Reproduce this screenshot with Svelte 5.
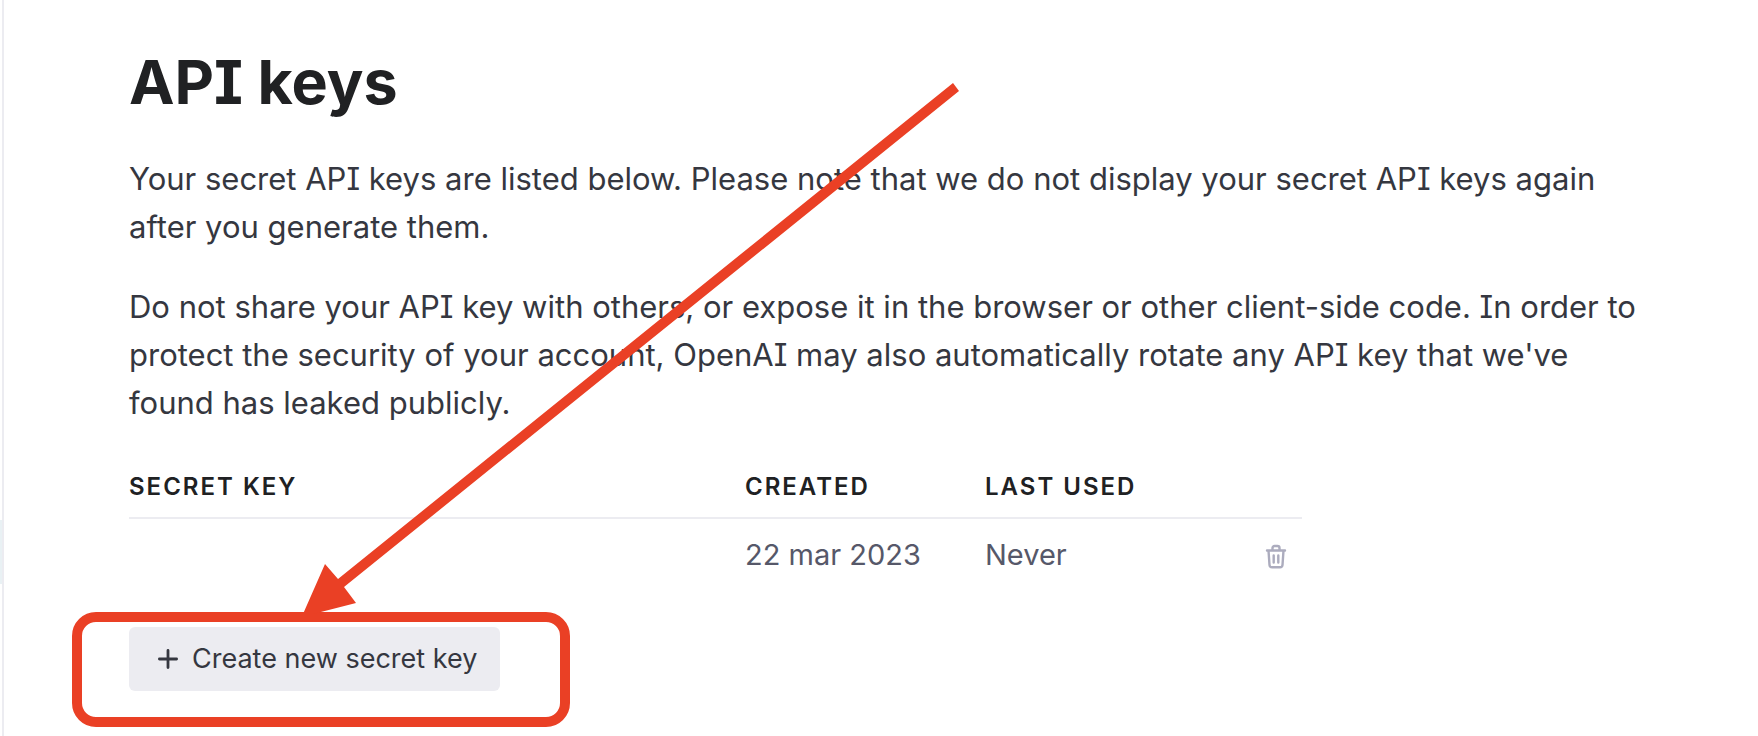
<script>
  const keys = [{ secret: '', created: '22 mar 2023', lastUsed: 'Never' }];
</script>

<div class="page">
  <div class="rail"><div class="active"></div></div>
  <main>
    <h1>API keys</h1>
    <p>
      Your secret API keys are listed below. Please note that we do not display your secret API keys
      again after you generate them.
    </p>
    <p>
      Do not share your API key with others, or expose it in the browser or other client-side code.
      In order to protect the security of your account, OpenAI may also automatically rotate any API
      key that we've found has leaked publicly.
    </p>
    <table>
      <thead>
        <tr>
          <th class="secret" scope="col">SECRET KEY</th>
          <th class="date" scope="col">CREATED</th>
          <th scope="col">LAST USED</th>
          <td></td>
        </tr>
      </thead>
      <tbody>
        {#each keys as key}
          <tr>
            <td>{key.secret}</td>
            <td>{key.created}</td>
            <td>{key.lastUsed}</td>
            <td class="actions">
              <button class="delete" aria-label="Delete key">
                <svg width="24" height="28" viewBox="0 0 24 28" fill="none" stroke="currentColor" stroke-width="2.4" stroke-linecap="round" stroke-linejoin="round">
                  <path d="M3 7.500h18M8.500 7.500V5a2 2 0 0 1 2-2h3a2 2 0 0 1 2 2V7.500M4.500 7.500l1 14.500a2.500 2.500 0 0 0 2.500 2.300h8a2.500 2.500 0 0 0 2.500-2.300L19.500 7.500M9.700 12.500v7M14.300 12.500v7" />
                </svg>
              </button>
            </td>
          </tr>
        {/each}
      </tbody>
    </table>
    <div class="create-row">
      <button class="create">
        <svg width="20" height="20" viewBox="0 0 20 20" fill="none" stroke="currentColor" stroke-width="2.800" stroke-linecap="round">
          <path d="M10 1.400v17.200M1.400 10h17.200" />
        </svg>
        Create new secret key
      </button>
      <div class="highlight"></div>
      <svg class="arrow" width="660" height="531" viewBox="0 0 660 531">
        <path d="M0 531L22 481L35 496L650 0L656 8L41 504L53 520L10 531Z" fill="#ea4025" />
      </svg>
    </div>
  </main>
</div>

<style>
  :global(body) {
    margin: 0;
    background: #fff;
  }
  .page {
    display: flex;
    min-height: 100vh;
    overflow: hidden;
    font-family: Inter, 'Liberation Sans', sans-serif;
    font-feature-settings: 'cv08';
    color: #353740;
  }
  .rail {
    flex: none;
    width: 2px;
    border-right: 2px solid #ececf1;
  }
  .active {
    height: 64px;
    margin-top: 520px;
    background: #e9f1f4;
  }
  main {
    flex: 1;
    padding: 44px 105px 44px 125px;
  }
  h1 {
    margin: 0 0 35px;
    font-size: 61px;
    line-height: 76px;
    font-weight: 700;
    color: #202123;
  }
  p {
    margin: 0 0 32px;
    font-size: 31px;
    line-height: 48px;
  }
  table {
    width: 77%;
    margin-top: 44px;
    table-layout: fixed;
    border-collapse: collapse;
    text-align: left;
  }
  th {
    padding: 0 0 14px;
    font-size: 24px;
    line-height: 32px;
    font-weight: 600;
    letter-spacing: 2px;
    color: #202123;
  }
  thead tr {
    border-bottom: 2px solid #ececf1;
  }
  .secret {
    width: 616px;
  }
  .date {
    width: 240px;
  }
  td {
    padding: 0;
    font-size: 29px;
    line-height: 48px;
    color: #565869;
  }
  tbody td {
    padding: 12px 0;
  }
  button {
    border: 0;
    font: inherit;
    cursor: pointer;
  }
  .actions {
    text-align: right;
  }
  .delete {
    padding: 0 14px;
    background: none;
    color: #acacbe;
    line-height: 28px;
    vertical-align: middle;
  }
  .delete svg {
    display: block;
  }
  .create-row {
    position: relative;
    display: flex;
    margin-top: 36px;
  }
  .create {
    display: flex;
    align-items: center;
    gap: 14px;
    height: 64px;
    padding: 0 23px 0 29px;
    border-radius: 6px;
    background: #ececf1;
    color: #353740;
    font-size: 27px;
    line-height: 40px;
  }
  .highlight {
    position: absolute;
    left: -57px;
    top: -15px;
    box-sizing: border-box;
    width: 498px;
    height: 115px;
    border: 10px solid #ea4025;
    border-radius: 24px;
    pointer-events: none;
  }
  .arrow {
    position: absolute;
    left: 174px;
    bottom: 77px;
    pointer-events: none;
  }
</style>
